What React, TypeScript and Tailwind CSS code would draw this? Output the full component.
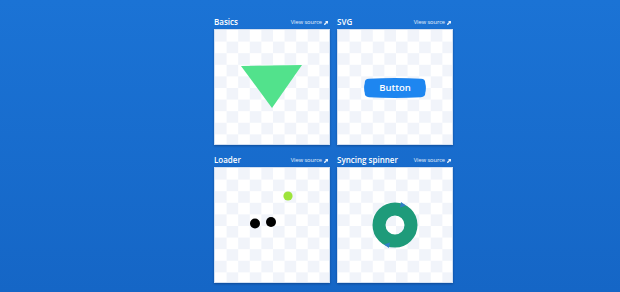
import React from "react";

const checker =
  "relative h-[116px] w-[116px] border border-[#d3e0f1] shadow-[0_1px_2px_rgba(0,20,60,0.35)] bg-[conic-gradient(#ffffff_90deg,#f1f4fa_90deg_180deg,#ffffff_180deg_270deg,#f1f4fa_270deg)] bg-[length:23.2px_23.2px] bg-left-top";

function ViewSource() {
  return (
    <span className="flex items-center gap-[2px] text-[5.6px] leading-none text-white/90">
      View source
      <svg width="4" height="4" viewBox="0 0 8 8" fill="currentColor">
        <path d="M2 0h6v6L6 4 1.5 8.5 -0.5 6.5 4 2z" />
      </svg>
    </span>
  );
}

function Demo({ title, children }: { title: string; children: React.ReactNode }) {
  return (
    <div className="flex flex-col">
      <div className="flex h-[15px] items-end justify-between pb-[3px] pr-[2px]">
        <span className="text-[8px] font-semibold leading-none text-white">{title}</span>
        <ViewSource />
      </div>
      <div className={checker}>{children}</div>
    </div>
  );
}

export default function App() {
  return (
    <div className="h-[292px] w-full overflow-hidden bg-gradient-to-b from-[#1b73d5] to-[#1566c6] font-['Open_Sans',sans-serif]">
      <div className="grid grid-cols-[116px_116px] gap-x-[7px] gap-y-[7px] pl-[214px] pt-[14px]">
        {/* Basics */}
        <Demo title="Basics">
          <svg className="absolute -left-px -top-px" width="116" height="116" viewBox="0 0 116 116">
            <polygon points="27,37 88,36 58,79" fill="#52e28c" />
          </svg>
        </Demo>

        {/* SVG */}
        <Demo title="SVG">
          <div className="flex h-full w-full items-center justify-center pt-[2px]">
            <button className="relative flex h-[20px] w-[62px] items-center justify-center">
              <svg className="absolute inset-0" width="62" height="20" viewBox="0 0 62 20">
                <path
                  d="M5 0.8 Q31 -0.6 57 0.8 Q61.5 1.2 61.2 5 Q62.6 10 61.2 15 Q61.5 18.8 57 19.2 Q31 20.6 5 19.2 Q0.5 18.8 0.8 15 Q-0.6 10 0.8 5 Q0.5 1.2 5 0.8z"
                  fill="#1e86f0"
                />
              </svg>
              <span className="relative text-[9.5px] font-semibold leading-none text-white">Button</span>
            </button>
          </div>
        </Demo>

        {/* Loader */}
        <Demo title="Loader">
          <svg className="absolute -left-px -top-px" width="116" height="116" viewBox="0 0 116 116">
            <circle cx="74" cy="29" r="4.6" fill="#9ee43b" />
            <circle cx="41" cy="56.5" r="5" fill="#000000" />
            <circle cx="57" cy="55" r="5" fill="#000000" />
          </svg>
        </Demo>

        {/* Syncing spinner */}
        <Demo title="Syncing spinner">
          <svg className="absolute -left-px -top-px" width="116" height="116" viewBox="0 0 116 116">
            <circle cx="58" cy="58" r="16" fill="none" stroke="#1e9b7a" strokeWidth="13" />
            <polygon points="64,35 69,38.5 63,40.5" fill="#2f7fc4" />
            <polygon points="52,81 47,77.5 53,75.5" fill="#2f7fc4" />
          </svg>
        </Demo>
      </div>
    </div>
  );
}
